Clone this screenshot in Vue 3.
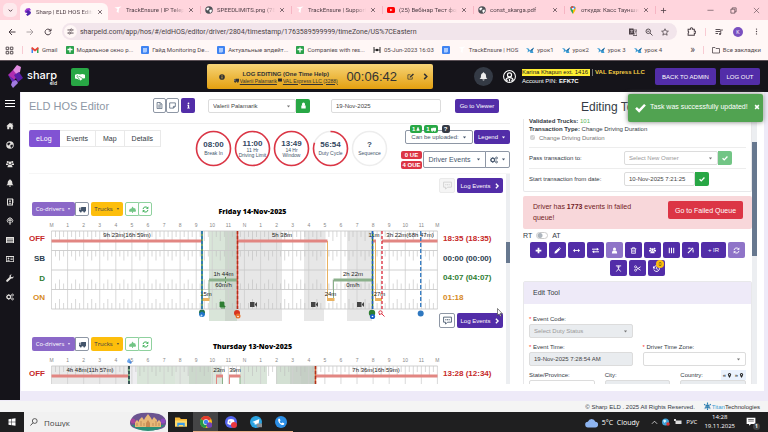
<script setup>
import { h } from 'vue'

const art = {
  chevD: '<path d="M4 6l4 4 4-4" fill="none" stroke="currentColor" stroke-width="2.2"/>',
  chevU: '<path d="M2 11l6-6 6 6" fill="none" stroke="currentColor" stroke-width="1.6"/>',
  chevR: '<path d="M5 2l6 6-6 6" fill="none" stroke="currentColor" stroke-width="3.4"/>',
  caret: '<path d="M3 5h10l-5 6z"/>',
  close: '<path d="M3 3l10 10M13 3L3 13" fill="none" stroke="currentColor" stroke-width="2"/>',
  closeThin: '<path d="M2 2l12 12M14 2L2 14" fill="none" stroke="currentColor" stroke-width="1.3"/>',
  xbold: '<path d="M3 3l10 10M13 3L3 13" fill="none" stroke="currentColor" stroke-width="4"/>',
  plusThin: '<path d="M8 2v12M2 8h12" fill="none" stroke="currentColor" stroke-width="1.8"/>',
  min: '<path d="M1 7.500h14" stroke="currentColor" stroke-width="1.4"/>',
  restore: '<path d="M2 5h9v9H2zM5 5V2h9v9h-3" fill="none" stroke="currentColor" stroke-width="1.6"/>',
  back: '<path d="M15 8H2M8 2L2 8l6 6" fill="none" stroke="currentColor" stroke-width="2"/>',
  fwd: '<path d="M1 8h13M8 2l6 6-6 6" fill="none" stroke="currentColor" stroke-width="1.8"/>',
  reload: '<path d="M13.500 9A5.700 5.700 0 1 1 12 4l2 2M14 1.500V6H9.500" fill="none" stroke="currentColor" stroke-width="2"/>',
  tune: '<path d="M1 4.500h6M13 4.500h2M1 11.500h2M9 11.500h6" stroke="currentColor" stroke-width="2"/><circle cx="10" cy="4.500" r="2.300" fill="none" stroke="currentColor" stroke-width="1.800"/><circle cx="6" cy="11.500" r="2.300" fill="none" stroke="currentColor" stroke-width="1.800"/>',
  translate: '<path d="M0 1h9l2 12H0z"/><path d="M9 4h7v11H8" fill="none" stroke="currentColor" stroke-width="1.500"/><path d="M2.500 5h5M5 3.500V5M7 5c-.5 2-2 4-4.500 5M4 6.500L7 10" stroke="#f3e5ec" fill="none"/><path d="M11 7h4M13 7c0 3-1 4-3 6" stroke="currentColor" fill="none"/>',
  zoomout: '<circle cx="6.500" cy="6.500" r="4.500" fill="none" stroke="currentColor" stroke-width="1.800"/><path d="M10 10l5 5M4.500 6.500h4" stroke="currentColor" stroke-width="1.800"/>',
  star: '<path d="M8 1.500l2 4.500 4.800.4-3.700 3.200 1.200 4.800L8 11.800l-4.300 2.600 1.200-4.800L1.200 6.400 6 6z" fill="none" stroke="currentColor" stroke-width="1.500"/>',
  ext: '<path d="M2 4h4.200a2 2 0 1 1 3.600 0H13v3.500a2 2 0 1 1 0 3.600V14.500H2V11a2 2 0 0 0 0-3.500z" fill="none" stroke="currentColor" stroke-width="1.800"/>',
  media: '<path d="M1 3h10M1 7h10M1 11h5" stroke="currentColor" stroke-width="1.800"/><circle cx="10" cy="12" r="2"/><path d="M11.500 12V4H16" fill="none" stroke="currentColor" stroke-width="1.600"/>',
  dots: '<circle cx="8" cy="2.500" r="1.500"/><circle cx="8" cy="8" r="1.500"/><circle cx="8" cy="13.500" r="1.500"/>',
  apps: '<path d="M2 2h4.500v4.500H2zM9.500 2H14v4.500H9.500zM2 9.500h4.500V14H2zM9.500 9.500H14V14H9.500z" fill="none" stroke="currentColor" stroke-width="1.700"/>',
  folder: '<path d="M1 3h5l2 2h7v9H1z" fill="none" stroke="currentColor" stroke-width="1.600"/>',
  gmail: '<path d="M1 14V4l3 2v8z" fill="#4285f4"/><path d="M15 14V4l-3 2v8z" fill="#34a853"/><path d="M1 3l1.500-1L8 6.500 13.500 2 15 3v3L8 11 1 6z" fill="#ea4335"/>',
  sheets: '<rect width="16" height="16" rx="1.500" fill="#2ba24c"/><path d="M8 3v10M3 7h10" stroke="#fff" stroke-width="2.600"/>',
  docs: '<rect width="16" height="16" rx="2" fill="#3f83f1"/><path d="M4 4h8v7l-2 2H4z" fill="#a9cbff"/>',
  bars: '<path d="M2 2v12M14 2v12M2 8h12" stroke="#333" stroke-width="2"/><circle cx="8" cy="8" r="2.500" fill="#222"/>',
  bird: '<path d="M0 4l5 1 3 4 8-6-3 6 2 5H9L7 10l-4 3 1-5z" fill="#3b9bd3"/><path d="M8 9l8-6-3 6z" fill="#1b5f93"/>',
  te: '<path d="M1 3l14-2-5 4-1 9-4-3 2-5z" fill="#fff"/>',
  globe: '<circle cx="8" cy="8" r="7.500"/><path d="M3 4l4-1 2 2-2 2-1 2-3-1zM9 8l4-1 1 3-3 4-2-2z" fill="var(--hole,#fff)"/>',
  yt: '<rect y="2" width="16" height="12" rx="3" fill="#f00"/><path d="M6.500 5.500v5L11 8z" fill="#fff"/>',
  pin: '<path d="M8 0a5.500 5.500 0 0 0-5.500 5.500C2.500 9 8 16 8 16z" fill="#34a853"/><path d="M8 0a5.500 5.500 0 0 1 5.500 5.500C13.500 9 8 16 8 16z" fill="#fbbc04"/><path d="M2.800 4A5.500 5.500 0 0 1 13.200 4L8 8z" fill="#4285f4"/><path d="M3 3.500A5.500 5.500 0 0 1 8 0v6z" fill="#ea4335"/><circle cx="8" cy="5.500" r="2" fill="#fff"/>',
  logo: '<path d="M5 1l6-1 3 4-6 3-5 3-2-4z" fill="#9b3bd2"/><path d="M3 8l5-4 6 4-1 4-6 4-3-3 3-2z" fill="#4f23ad"/>',
  home: '<path d="M8 1.500L.5 8.500h2V14.500h4v-4h3v4h4v-6h2L13 6V2.500h-2V4.200z"/>',
  users: '<circle cx="3.500" cy="4" r="2.200"/><circle cx="12.500" cy="4" r="2.200"/><circle cx="8" cy="6" r="2.900"/><path d="M0 7h4.500c0 2 .8 3 1.500 3H0zM16 7h-4.500c0 2-.8 3-1.500 3h6zM3 14.500c0-4 2-5 5-5s5 1 5 5z"/>',
  bell: '<path d="M8 .5a1.200 1.200 0 0 0-1.200 1.300C4.500 2.500 3.500 4.500 3.500 7c0 3-1 4.500-2.500 5.500h14c-1.500-1-2.500-2.500-2.500-5.500 0-2.500-1-4.500-3.300-5.200A1.200 1.200 0 0 0 8 .5zM6 13.300a2 2 0 0 0 4 0z"/>',
  book: '<path d="M2 1h12v14H2z"/><path d="M4 3h8v10H4z" fill="#15141a"/><circle cx="8" cy="6.500" r="1.800"/><path d="M5 11.500c0-3 6-3 6 0z"/><path d="M14 3h1.500v2H14zM14 7h1.500v2H14z"/>',
  podcast: '<path d="M4.500 11.500a5.500 5.500 0 1 1 7 0M5.800 8.800a3 3 0 1 1 4.400 0" fill="none" stroke="currentColor" stroke-width="1.700"/><circle cx="8" cy="6.800" r="1.800"/><path d="M6.300 9.500h3.400L9 15.500H7z"/>',
  list: '<path d="M0 2h16v12H0z"/><path d="M2 6h12M2 9h12M2 12h12" stroke="#15141a" stroke-width="1.100"/>',
  idcard: '<path d="M0 2h16v12H0z"/><path d="M1.500 4h13v8.500h-13z" fill="#15141a"/><circle cx="5" cy="6.800" r="1.700"/><path d="M2.500 11.500c0-3 5-3 5 0zM9 5.500h4.500V7H9zM9 8.500h4.500V10H9z"/>',
  wrench: '<path d="M15 4.500l-2.500 2-2.500-.5L9.500 3.500 11.500 1C8.500.3 6.300 3 7.200 5.800L1 12a2 2 0 0 0 3 3l6.200-6.200C13 9.700 15.700 7.500 15 4.500z"/>',
  cogs: '<circle cx="5.500" cy="8" r="3.600" fill="none" stroke="currentColor" stroke-width="2.400"/><path d="M5.500 2.500v2M5.500 11.500v2M0 8h2M9 8h2M1.600 4l1.400 1.400M8 10.600L9.400 12M9.400 4L8 5.400M1.600 12L3 10.600" stroke="currentColor" stroke-width="1.800"/><circle cx="13" cy="4" r="1.900" fill="none" stroke="currentColor" stroke-width="1.700"/><circle cx="13" cy="12" r="1.900" fill="none" stroke="currentColor" stroke-width="1.700"/>',
  shake: '<path d="M0 4.500L4 3l4 1 4-1 4 1.500v5.500l-3 .5-4 3-5-2.500-4-.5z"/><path d="M4 5L3 8c1 1 3 .5 4-1l6 4M5 10l3 2" stroke="#28a745" fill="none" stroke-width="1.100"/>',
  info: '<circle cx="8" cy="8" r="7.500"/><path d="M8 6.500V12M8 3.500v2" stroke="#e9b840" stroke-width="2.400"/>',
  i: '<path d="M5.500 6.500h4V13H11v2H5v-2h1.500V8.500h-1z"/><circle cx="8" cy="3" r="2"/>',
  edit: '<path d="M12 9v5H2V4h6" fill="none" stroke="currentColor" stroke-width="1.600"/><path d="M6 10.500L6.500 8l7-7L16 3.500 8.500 10z"/>',
  headset: '<circle cx="8" cy="8" r="7.300" fill="none" stroke="currentColor" stroke-width="1.300"/><circle cx="8" cy="6" r="2.500" fill="none" stroke="currentColor" stroke-width="1.500"/><path d="M3.500 13c0-5 9-5 9 0M5 12v2M8 11v3M11 12v2" fill="none" stroke="currentColor" stroke-width="1.500"/>',
  doc: '<path d="M2.500 1h7l4 4v10h-11z" fill="none" stroke="currentColor" stroke-width="1.600"/><path d="M5 7h6M5 9.500h6M5 12h6M9 1v4h4" fill="none" stroke="currentColor" stroke-width="1.300"/>',
  note: '<path d="M1.500 2h13v8l-4 4h-9zM14 10h-4v4" fill="none" stroke="currentColor" stroke-width="1.600"/>',
  lock: '<path d="M8 1a4 4 0 0 0-3.500 4c0 1.500.5 2.500 1 3H3v7h10V8h-2.500c.5-.5 1-1.500 1-3A4 4 0 0 0 8 1z"/>',
  person: '<circle cx="8" cy="4.500" r="3.500"/><path d="M2 15c0-6 2-7 6-7s6 1 6 7z"/>',
  truck: '<path d="M0 4h5V2.500h11V12H0z"/><circle cx="4" cy="12.500" r="2.300"/><circle cx="12" cy="12.500" r="2.300"/><path d="M1.500 5.500h2.800V8H1z" fill="#fff"/>',
  tree: '<path d="M8 1l3 4h3l2 6-1 2H1l-1-2 2-5h3zM7 13h2v3H7z"/>',
  sync: '<path d="M2.500 7A5.500 5.500 0 0 1 12.500 4.500M13.500 9A5.500 5.500 0 0 1 3.500 11.500" fill="none" stroke="currentColor" stroke-width="2.100"/><path d="M14.500 1v5.500H9zM1.500 15V9.500H7z"/>',
  chat: '<path d="M1 2h14v9H8l-3.500 3.500V11H1z" fill="none" stroke="currentColor" stroke-width="1.500"/><path d="M4 6.500h2M7 6.500h2M10 6.500h2" stroke="currentColor" stroke-width="1.800"/>',
  check: '<path d="M1.500 8.500l4.500 4.500L14.500 4" fill="none" stroke="currentColor" stroke-width="3.600"/>',
  plus: '<path d="M8 1.500v13M1.500 8h13" stroke="currentColor" stroke-width="4"/>',
  pencil: '<path d="M1 15l1-4.500L10.500 2 14 5.500 5.500 14zM11.500 1l1-.8L15.800 3.500l-1 1z"/>',
  arrows: '<path d="M3 8h10" stroke="currentColor" stroke-width="2"/><path d="M0 8l4.500-4v8zM16 8l-4.500-4v8z"/>',
  swap: '<path d="M0 5h12M4 11h12" stroke="currentColor" stroke-width="2.200"/><path d="M11 1.500L16 5l-5 3.500zM5 7.500L0 11l5 3.500z"/>',
  trash: '<path d="M1.500 4h13M5.500 4V1.500h5V4M3.500 4v10.500h9V4M6.500 6.500v6M9.500 6.500v6" fill="none" stroke="currentColor" stroke-width="1.700"/>',
  cols: '<path d="M3 1.500v13M8 1.500v13M13 1.500v13" stroke="currentColor" stroke-width="2.400"/>',
  wand: '<path d="M2 14L14 2" stroke="currentColor" stroke-width="2.400"/><path d="M2 3h9M14 5v8M5 1v4M12 9h4" stroke="currentColor" stroke-width="1.500"/>',
  merge: '<path d="M2 2h12M8 4v5L3 15M8 9l5 6M5 5l3-2 3 2" fill="none" stroke="currentColor" stroke-width="2"/>',
  cut: '<circle cx="3.500" cy="4" r="2.300" fill="none" stroke="currentColor" stroke-width="1.700"/><circle cx="3.500" cy="12" r="2.300" fill="none" stroke="currentColor" stroke-width="1.700"/><path d="M5.500 5.500L15 12M5.500 10.500L15 4" stroke="currentColor" stroke-width="2"/>',
  history: '<path d="M2 6a6.500 6.500 0 1 1 0 4.500" fill="none" stroke="currentColor" stroke-width="2.200"/><path d="M0 2v6h6zM7.500 4.500h1.800V8l2.500 1.500-1 1.300L7.500 9z"/>',
  marker: '<path d="M8 0a5 5 0 0 0-5 5c0 4 5 11 5 11s5-7 5-11a5 5 0 0 0-5-5z"/><circle cx="8" cy="5.500" r="2" fill="#eaf2fd"/>',
  win: '<path d="M1 2.500l6-.8v5.800H1zM8 1.600L15 .5v7H8zM1 8.500h6v5.800l-6-.8zM8 8.500h7v7l-7-1z"/>',
  search: '<circle cx="9.500" cy="6" r="4.800" fill="none" stroke="currentColor" stroke-width="1.500"/><path d="M6 9.500L1 15" stroke="currentColor" stroke-width="1.700"/>',
  files: '<path d="M0 2h6l2 2h8v10H0z" fill="#f5b93a"/><path d="M0 6h16v8H0z" fill="#ffd968"/><path d="M3 9h10v5H11v-2H5v2H3z" fill="#3a9be8"/>',
  chrome: '<circle cx="8" cy="8" r="8" fill="#fbc116"/><path d="M8 8L1 4a8 8 0 0 1 14 0z" fill="#e33b2e"/><path d="M8 8L1 4a8 8 0 0 0 6 12l4-6z" fill="#279847"/><circle cx="8" cy="8" r="3.800" fill="#fff"/><circle cx="8" cy="8" r="3" fill="#3f83f1"/><circle cx="12.500" cy="12" r="3.800" fill="#7443b8"/>',
  discord: '<circle cx="8" cy="8" r="8" fill="#5566ee"/><path d="M4 5c2-1.500 6-1.500 8 0l1 5-2.500 1.500H5.500L3 10z" fill="#fff"/><circle cx="6.300" cy="8" r="1" fill="#5566ee"/><circle cx="12" cy="12" r="4" fill="#e9373f"/>',
  telegram: '<circle cx="8" cy="8" r="8" fill="#2ba3e0"/><path d="M3 8l9.500-4-1.500 8.500-3-2-1.500 1.500-.5-3z" fill="#fff"/><path d="M9 10h7v5H9z" fill="#8b8f94"/>',
  phone: '<circle cx="8" cy="8" r="8" fill="#2c8fe6"/><path d="M4.500 3.500l2 .2.800 2.500-1 1c.5 1.300 1.300 2 2.500 2.500l1-1 2.500 1-.2 2C8 13 3 8 4.500 3.500z" fill="#fff"/>',
  cloud: '<path d="M4 14a3.500 3.500 0 0 1-.5-7A5 5 0 0 1 12.800 7 3.500 3.500 0 0 1 12.500 14z" fill="#8db4f0"/>',
  world: '<circle cx="7" cy="8" r="7" fill="#3fa3d8"/><path d="M2 5l4-2 3 3-4 4z" fill="#d7f0ff"/><circle cx="12" cy="12" r="3.500" fill="#d33"/>',
  notif: '<path d="M1 1h14v10H8l-3 3v-3H1z" fill="#fff"/><path d="M3.500 4h9M3.500 6.500h9" stroke="#222"/>',
  batt: '<path d="M3 5h12v7H3zM0 2h4v4H0z" fill="#ddd"/>',
  titan: '<path d="M8 1v14M2 4l12 8M14 4L2 12" stroke="#2a82b8" stroke-width="2" stroke-dasharray="2.500 1"/><circle cx="8" cy="8" r="3" fill="none" stroke="#2a6f9c" stroke-width="1.500"/>',
}
const Icon = (p) => h('svg', {
  viewBox: '0 0 16 16', width: p.s || 8, height: p.s || 8, fill: 'currentColor', 'aria-hidden': 'true', innerHTML: art[p.n],
})
Icon.props = ['n', 's']

const tabs = [
  { t: 'TrackEnsure | IP Telephony', i: 'te' },
  { t: 'SPEEDLIMITS.png (780×', i: 'globe' },
  { t: 'TrackEnsure | Support', i: 'te' },
  { t: '(25) Вебінар Тест форм', i: 'yt' },
  { t: 'const_skarga.pdf', i: 'globe' },
  { t: 'откуда: Касс Тауншип', i: 'pin' },
]
const marks = [
  { t: 'Gmail', i: 'gmail' },
  { t: 'Модальное окно р...', i: 'sheets' },
  { t: 'Гайд Monitoring De...', i: 'docs' },
  { t: 'Актуальные апдейт...', i: 'docs' },
  { t: 'Companies with res...', i: 'sheets' },
  { t: '05-Jun-2023 16:03', i: 'bars' },
  { t: '', i: 'docs' },
  { t: 'TrackEnsure | HOS', i: 'te' },
  { t: 'урок1', i: 'bird' },
  { t: 'урок2', i: 'bird' },
  { t: 'урок 3', i: 'bird' },
  { t: 'урок 4', i: 'bird' },
]
const side = ['home', 'globe', 'users', 'bell', 'book', 'podcast', 'list', 'idcard', 'wrench', 'cogs']

const ringLen = 2 * Math.PI * 17
const rings = [
  { v: '08:00', a: 'Break In', part: 1 },
  { v: '11:00', a: '11 Hr', b: 'Driving Limit', part: 1 },
  { v: '13:49', a: '14 Hr', b: 'Window', part: 1 },
  { v: '56:54', a: 'Duty Cycle', part: 0.8 },
  { v: '?', a: 'Sequence', part: 0 },
]

const X0 = 51.5
const HW = 16.08
const hours = ['M', 1, 2, 3, 4, 5, 6, 7, 8, 9, 10, 11, 'N', 1, 2, 3, 4, 5, 6, 7, 8, 9, 10, 11, 'M']
const hx = (i) => X0 + HW * i
const rowTop = (r) => 231 + 19.5 * r
const ticks = (() => {
  let d = ''
  for (let r = 0; r < 4; r++) {
    for (let q = 0; q < 96; q++) {
      if (q % 4 === 0) continue
      const len = q % 4 === 2 ? 10 : 6
      const x = (X0 + (HW * q) / 4).toFixed(1)
      d += r < 2 ? `M${x} ${rowTop(r)}v${len}` : `M${x} ${rowTop(r + 1)}v${-len}`
    }
  }
  return d
})()
const red = '#e28682', grn = '#8bb08b', org = '#e9b261'
const days = [
  {
    title: 'Friday 14-Nov-2025', chatOff: true,
    shades: [[209, 16, '#d9e5d9'], [225, 12, '#ccd6cc'], [237, 45, '#e7e7e7'], [304, 20, '#e7e7e7'], [347, 25, '#e7e7e7']],
    bars: [[51.5, 202, 241, red], [202.5, 209.5, 299.5, org], [209, 237, 280, grn], [238, 327.5, 241, red], [327, 334.5, 299.5, org], [333.5, 373, 280, grn], [373, 376, 241, red], [375, 382, 299.5, org], [382, 437.5, 241, red]],
    links: [[209, 280, 299, grn], [327.5, 241, 299, org], [333.5, 280, 299, grn], [375.5, 241, 299, org], [225.5, 277, 283, '#3f7d3f']],
    lines: [[202, '#2e7d32', ''], [202, '#1e73c8', '3 2'], [237.5, '#e23b2e', ''], [237.5, '#b0301a', '3 2'], [372.5, '#2e7d32', ''], [372.5, '#1e5fc8', '3 2'], [382, '#dc3545', '3 2'], [420.7, '#3a7fc4', '4 2']],
    notes: [[127, 236.5, '9h 23m(16h 59m)'], [223.5, 276, '1h 44m'], [223.5, 286.5, '60m/h'], [206, 295.5, '15m'], [282, 236.5, '5h 38m'], [330.5, 295.5, '24m'], [353, 276, '2h 22m'], [353, 286.5, '0m/h'], [374, 236.5, '11m'], [379.5, 295.5, '27m'], [410, 236.5, '3h 22m(68h 47m)']],
    cams: [253, 314, 360], full: true,
    total: '18:35 (18:35)',
  },
  {
    title: 'Thursday 13-Nov-2025', chatOff: false,
    shades: [[51.5, 77, '#e9e9e9'], [130, 7, '#eeeef1'], [137, 38, '#d9e5d9'], [175, 14, '#dfe6df'], [189, 22, '#ccd9cc'], [211, 11, '#dce6dc'], [240, 27, '#d9e5d9'], [276, 14, '#d3e0d3'], [290, 11, '#c9d2c9'], [301, 14, '#c5cfc5']],
    bars: [[51.5, 128.5, 241, red], [216, 223, 241, red], [229, 240.5, 241, red], [315.5, 437.5, 241, red]],
    links: [[216.5, 241, 300, red], [222.5, 241, 300, grn], [229.5, 241, 300, red], [240, 241, 300, grn]],
    lines: [[129, '#3f8f4f', ''], [129, '#234', '3 2'], [315.5, '#e2602e', ''], [315.5, '#b0301a', '3 2']],
    notes: [[90, 236.5, '4h 48m(11h 57m)'], [219, 236.5, '23m'], [235, 236.5, '39m'], [376, 236.5, '7h 36m(16h 59m)']],
    cams: [], full: false,
    total: '13:28 (12:34)',
  },
]
const tools = ['plus', 'pencil', 'arrows', 'swap', 'person', 'trash', 'users', 'cols', 'wand', 'ir', 'sync', 'merge', 'cut', 'history']
</script>

<template>
  <div class="screen">
    <nav class="tabstrip">
      <button class="tabmenu" aria-label="Search tabs"><Icon n="chevD" s="7" /></button>
      <div class="tab active">
        <Icon n="logo" /><span class="tabtext">Sharp | ELD HOS Editor</span><Icon n="close" s="6" />
      </div>
      <div v-for="t in tabs" :key="t.t" class="tab">
        <Icon :n="t.i" class="grey" /><span class="tabtext">{{ t.t }}</span><Icon n="close" s="6" />
      </div>
      <Icon n="plusThin" s="7" class="newtab" />
      <div class="winbtns"><Icon n="min" s="7" /><Icon n="restore" s="7" /><Icon n="closeThin" s="7" /></div>
    </nav>
    <div class="toolbar">
      <Icon n="back" /><Icon n="fwd" class="dim" /><Icon n="reload" />
      <div class="omni">
        <span class="tune"><Icon n="tune" s="7" /></span>
        <span class="url">sharpeld.com/app/hos/#/eldHOS/editor/driver/2804/timestamp/1763589599999/timeZone/US%7CEastern</span>
        <Icon n="translate" /><Icon n="zoomout" /><Icon n="star" />
      </div>
      <Icon n="ext" s="9" /><i class="vsep"></i><Icon n="media" /><span class="avatar">K</span><Icon n="dots" s="7" />
    </div>
    <div class="marks">
      <Icon n="apps" s="9" /><i class="vsep"></i>
      <a v-for="m in marks" :key="m.t + m.i" href="#" class="mark"><Icon :n="m.i" /><span v-if="m.t">{{ m.t }}</span></a>
      <span class="more">»</span><i class="vsep"></i>
      <a href="#" class="mark"><Icon n="folder" /><span>Все закладки</span></a>
    </div>

    <header class="apphead">
      <a href="#" class="brand">
        <svg viewBox="0 0 15 23" width="15" height="23" aria-hidden="true">
          <path d="M5 5L9 0l4 2-1 5-6 4z" fill="#e08be0" /><path d="M0 10l5-5 5 6-4 4z" fill="#b02db0" />
          <path d="M6 10l5-3 4 6-5 4z" fill="#5a1fa8" /><path d="M0 10l4 3 6 4-4 3z" fill="#6a2bbb" /><path d="M4 17l4-2 2 3-5 5-2-3z" fill="#a27be0" />
        </svg>
        <span class="bname">sharp<small>eld</small></span>
      </a>
      <button class="shake" aria-label="Partners"><Icon n="shake" s="10" /></button>
      <div class="editbar">
        <Icon n="info" s="6" />
        <div class="edittext"><b>LOG EDITING (One Time Help)</b><a href="#"><Icon n="truck" s="5" /> Valerii Palamarik <Icon n="list" s="4" /> VAL Express LLC (3288)</a></div>
        <span class="timer">00:06:42</span>
        <Icon n="edit" s="7" /><Icon n="chevR" s="7" />
      </div>
      <span class="bellbox"><Icon n="bell" s="9" /></span>
      <Icon n="headset" s="13" class="headset" />
      <div class="who"><div><mark>Karina Khapun ext. 1416</mark><i></i><b class="comp">VAL Express LLC</b></div><div>Account PIN: <b>EFK7C</b></div></div>
      <button class="btn big admin">BACK TO ADMIN</button>
      <button class="btn big">LOG OUT</button>
      <div class="toast" role="status"><Icon n="check" s="11" /><span>Task was successfully updated!</span><Icon n="xbold" s="6" /></div>
    </header>

    <div class="body">
      <aside class="side">
        <button class="burger" aria-label="Menu"><i></i><i></i><i></i></button>
        <a v-for="s in side" :key="s" href="#" :aria-label="s"><Icon :n="s" /></a>
      </aside>
      <main class="main">
        <section class="left">
          <div class="filters">
            <h1>ELD HOS Editor</h1>
            <div class="group">
              <button class="ob" aria-label="Document"><Icon n="doc" s="7" /></button><button class="ob" aria-label="Note"><Icon n="note" s="7" /></button><button class="btn sq" aria-label="Info"><Icon n="i" s="7" /></button>
            </div>
            <div class="group driver">
              <div class="selwrap"><select class="sel" aria-label="Driver"><option>Valerii Palamarik</option></select><Icon n="caret" s="5" /></div>
              <button class="green" aria-label="Lock"><Icon n="lock" s="7" /></button>
            </div>
            <input class="inp" aria-label="Date" value="19-Nov-2025">
            <button class="btn viewer">Go to Viewer</button>
          </div>
          <div class="summary">
            <div class="pills"><button class="on">eLog</button><button>Events</button><button>Map</button><button>Details</button></div>
            <div class="rings">
              <svg v-for="r in rings" :key="r.v" viewBox="0 0 37 37" width="37" height="37" role="img">
                <circle cx="18.500" cy="18.500" r="17" fill="none" stroke="#ededed" stroke-width="1.500" />
                <circle v-if="r.part" cx="18.500" cy="18.500" r="17" fill="none" stroke="#dc3545" stroke-width="1.600" :stroke-dasharray="`${ringLen * r.part} ${ringLen}`" transform="rotate(-90 18.500 18.500)" />
                <text x="18.500" :y="r.b ? 15.5 : 16.5" class="rv">{{ r.v }}</text>
                <text x="18.500" :y="r.b ? 21.5 : 24.5" class="rt">{{ r.a }}</text>
                <text v-if="r.b" x="18.500" y="26.500" class="rt">{{ r.b }}</text>
              </svg>
            </div>
            <div class="ctl">
              <div class="ctlrow">
                <button class="ob upload">Can be uploaded: <Icon n="caret" s="5" /><span class="badges"><b>1<Icon n="person" s="4" /></b><b>1<Icon n="truck" s="5" /></b><b class="q">?</b></span></button>
                <button class="btn legend">Legend <Icon n="caret" s="5" /></button>
              </div>
              <div class="ctlrow second">
                <div class="ue"><b>0 UE</b><b>4 OUE</b></div>
                <button class="ob devents">Driver Events <Icon n="caret" s="5" /></button>
                <button class="ob gear" aria-label="Settings"><Icon n="cogs" /><Icon n="caret" s="5" /></button>
              </div>
            </div>
          </div>
          <div class="scroll">
            <div class="days">
              <article v-for="d in days" :key="d.title" class="day">
                <div class="dayacts">
                  <button class="ob chat" :class="{ off: d.chatOff }" aria-label="Comment"><Icon n="chat" s="9" /></button>
                  <button class="btn">Log Events <Icon n="chevR" s="6" /></button>
                  <svg v-if="!d.full" class="cursor" viewBox="0 0 6 9" width="6" height="9" aria-hidden="true"><path d="M.5.5v7l1.600-1.500 1.200 2.500 1-.5-1.100-2.400H5.300z" fill="#fff" stroke="#333" stroke-width=".6" /></svg>
                </div>
                <div class="dayhead">
                  <div class="group">
                    <button class="codr">Co-drivers <Icon n="caret" s="4" /></button><button class="ob trk" aria-label="Truck"><Icon n="truck" s="7" /></button>
                    <button class="trucks">Trucks <Icon n="caret" s="4" /></button>
                    <button class="go a" aria-label="Tree"><Icon n="tree" s="7" /></button><button class="go b" aria-label="Refresh"><Icon n="sync" s="7" /></button>
                  </div>
                  <h2>{{ d.title }}</h2>
                </div>
                <svg class="chart" viewBox="29 220 477 93">
                  <rect v-for="(s, i) in d.shades" :key="i" :x="s[0]" y="231" :width="s[1]" height="90" :fill="s[2]" />
                  <text v-for="(t, i) in hours" :key="'h' + i" :x="hx(i)" y="227" class="hr">{{ t }}</text>
                  <path :d="ticks" stroke="#bdbdbd" stroke-width=".6" />
                  <path v-for="(t, i) in hours" :key="'v' + i" :d="`M${hx(i)} 231v78`" stroke="#cfcfcf" stroke-width=".8" />
                  <path v-for="r in 5" :key="'r' + r" :d="`M51.500 ${rowTop(r - 1)}h386`" stroke="#c9c9c9" stroke-width=".9" />
                  <path v-for="(l, i) in d.links" :key="'k' + i" :d="`M${l[0]} ${l[1]}V${l[2]}`" :stroke="l[3]" stroke-width="1" />
                  <path v-for="(b, i) in d.bars" :key="'b' + i" :d="`M${b[0]} ${b[2]}H${b[1]}`" :stroke="b[3]" stroke-width="3" />
                  <text v-for="(n, i) in d.notes" :key="'n' + i" :x="n[0]" :y="n[1]" class="dur">{{ n[2] }}</text>
                  <path v-for="(l, i) in d.lines" :key="'l' + i" :d="`M${l[0]} 231v78`" :stroke="l[1]" stroke-width="1.400" :stroke-dasharray="l[2]" />
                  <path v-for="c in d.cams" :key="'c' + c" :d="`M${c - 3} 302h4.500v5h-4.500zM${c + 2} 304l2-2v5l-2-2z`" fill="#444" />
                  <g v-if="d.full">
                    <path d="M220 302h4v4h1v1h-5zM221 308h4" fill="#2e7d32" stroke="#2e7d32" stroke-width=".8" />
                    <circle cx="202" cy="312.500" r="3" fill="#27754f" /><path d="M199 313.500a3 3.500 0 1 0 6 0l-3-2z" fill="#1e73c8" />
                    <circle cx="201.500" cy="315.500" r="1" fill="#bfe0ff" />
                    <circle cx="237" cy="313" r="3" fill="#d8341f" /><circle cx="238" cy="316" r="2.500" fill="#e8702a" /><circle cx="238" cy="316.500" r=".8" fill="#fff" />
                    <circle cx="372" cy="313" r="3.200" fill="#2e7d32" /><circle cx="372.500" cy="316.500" r="2.600" fill="#1e62c8" /><circle cx="372.500" cy="316.500" r=".8" fill="#fff" />
                    <circle cx="380.500" cy="312.500" r="1.700" fill="none" stroke="#dc3545" /><path d="M381.500 313.500l3 3M380 315l-1-1" stroke="#dc3545" />
                    <circle cx="420.700" cy="313.500" r="3" fill="#2f78c0" />
                    <text x="45" y="241" class="st end" fill="#c62828">OFF</text><text x="45" y="261" class="st end" fill="#2c3e50">SB</text>
                    <text x="45" y="280.500" class="st end" fill="#2e7d32">D</text><text x="45" y="300" class="st end" fill="#d68a1c">ON</text>
                    <text x="443" y="241" class="st" fill="#c62828">{{ d.total }}</text><text x="443" y="260.500" class="st" fill="#2c3e50">00:00 (00:00)</text>
                    <text x="443" y="280" class="st" fill="#2e7d32">04:07 (04:07)</text><text x="443" y="299.500" class="st" fill="#d68a1c">01:18</text>
                  </g>
                  <g v-else>
                    <text x="45" y="241" class="st end" fill="#c62828">OFF</text><text x="443" y="241" class="st" fill="#c62828">{{ d.total }}</text>
                    <path d="M129 223l2 3a2 2 0 1 1-4 0z" fill="#6aa5ee" /><circle cx="130.500" cy="227.500" r="1.200" fill="#4a86d8" />
                  </g>
                </svg>
              </article>
            </div>
            <div class="track"><i class="thumb lthumb"></i></div>
          </div>
        </section>

        <section class="right">
          <h2 class="rtitle">Editing Tools</h2>
          <div class="scroll">
            <div class="panel">
              <div class="card trans">
                <p class="cut"><b>Validated Trucks:</b> <span class="gtext">101</span></p>
                <p><b>Transaction Type:</b> Change Driving Duration</p>
                <label class="chk"><input type="checkbox" checked disabled> Change Driving Duration</label>
                <div class="trow">
                  <label for="owner">Pass transaction to:</label>
                  <div class="group"><div class="selwrap own"><select id="owner" class="sel ph"><option>Select New Owner</option></select><Icon n="caret" s="5" /></div><button class="green fade" aria-label="Apply owner"><Icon n="check" s="6" /></button></div>
                </div>
                <div class="trow">
                  <label for="start">Start transaction from date:</label>
                  <div class="group"><input id="start" class="inp date" value="10-Nov-2025 7:21:25"><button class="green" aria-label="Apply date"><Icon n="check" s="6" /></button></div>
                </div>
              </div>
              <div class="alert"><p>Driver has <b>1773</b> events in failed queue!</p><button>Go to Failed Queue</button></div>
              <label class="rt-at">RT <input type="checkbox" class="sw"> AT</label>
              <div class="tools">
                <button v-for="t in tools" :key="t" class="btn tool" :class="{ soft: t === 'person' || t === 'sync', wide: t === 'ir' }" :aria-label="t">
                  <span v-if="t === 'ir'">+ IR</span><Icon v-else :n="t" s="7" /><span v-if="t === 'history'" class="cnt">0</span>
                </button>
              </div>
              <div class="card tool-card">
                <h3>Edit Tool</h3>
                <div class="form">
                  <div class="fld half"><label for="code"><em>*</em> Event Code:</label><div class="selwrap"><select id="code" class="sel ph dis" disabled><option>Select Duty Status</option></select><Icon n="caret" s="5" /></div></div>
                  <div class="two">
                    <div class="fld"><label for="time"><em>*</em> Event Time:</label><input id="time" class="inp dis" value="19-Nov-2025 7:28:54 AM"></div>
                    <div class="fld"><label for="tz"><em>*</em> Driver Time Zone:</label><div class="selwrap"><select id="tz" class="sel"><option></option></select><Icon n="caret" s="5" /></div></div>
                  </div>
                  <div class="three">
                    <div class="fld"><label for="st">State/Province:</label><input id="st" class="inp"></div>
                    <div class="fld"><label for="city">City:</label><input id="city" class="inp dis"></div>
                    <div class="fld"><div class="crow"><label for="ctry">Country:</label><span class="pins">«<Icon n="marker" s="5" /> »<Icon n="marker" s="5" /></span></div><input id="ctry" class="inp dis"></div>
                  </div>
                </div>
              </div>
            </div>
            <div class="track"><i class="thumb rthumb"></i></div>
          </div>
        </section>
      </main>
    </div>
    <footer class="foot"><span>© Sharp ELD . 2025 All Rights Reserved.</span><span class="titan"><Icon n="titan" s="9" /><i>Titan</i>Technologies</span></footer>

    <div class="taskbar">
      <button class="start" aria-label="Start"><Icon n="win" /></button>
      <label class="tsearch"><Icon n="search" /><input type="text" placeholder="Пошук" aria-label="Пошук"></label>
      <svg class="castle" viewBox="0 0 38 20" width="38" height="20" aria-hidden="true">
        <path d="M1 10Q3 2 12 1T30 2Q38 5 37 12T19 18Q0 18 1 10z" fill="#6b5490" /><path d="M2 13h34l-6 4q-11 4-22 0z" fill="#2b8f76" />
        <path d="M6 15V10l2-2 2 2V8l3-3 2 3 1-2 3-4 3 4 1 2 2-3 3 3v2l2-2 2 2v5z" fill="#e8b878" /><path d="M17 15v-4l2-3 2 3v4z" fill="#c98a52" />
        <path d="M8 11v3M12 9v5M15 11v3M24 11v3M27 9v5M30 11v3" stroke="#b07a4a" stroke-width=".7" /><circle cx="4" cy="9" r="2.500" fill="#a8479a" /><circle cx="34" cy="9" r="2.500" fill="#8f4ac0" />
      </svg>
      <div class="apps">
        <button aria-label="Files"><Icon n="files" s="12" /></button><button class="run cur" aria-label="Chrome"><Icon n="chrome" s="12" /></button>
        <button class="run" aria-label="Discord"><Icon n="discord" s="12" /></button><button class="run" aria-label="Telegram"><Icon n="telegram" s="12" /></button><button class="run" aria-label="Phone"><Icon n="phone" s="12" /></button>
      </div>
      <div class="tray">
        <Icon n="cloud" s="13" /><span class="wx">5°C&nbsp; Cloudy</span><Icon n="chevU" s="7" /><Icon n="world" /><Icon n="batt" /><span class="lang">РУС</span>
        <span class="clock">14:28<br>19.11.2025</span><span class="nt"><Icon n="notif" s="10" /><b>1</b></span>
      </div>
    </div>
  </div>
</template>

<style>
body { background: #fff; }
</style>
<style scoped>
* { box-sizing: border-box; margin: 0; }
.screen { height: 100vh; display: flex; flex-direction: column; overflow: hidden; font: 6px/8px "Liberation Sans", sans-serif; color: #333a44; }
svg { flex: none; display: block; }
button, input, select { font: inherit; color: inherit; border: 0; padding: 0; background: none; }
button { display: flex; align-items: center; justify-content: center; white-space: nowrap; gap: 3px; }
a { color: inherit; text-decoration: none; }
.tabstrip { flex: none; height: 20px; background: #ffd5dd; display: flex; align-items: center; font: 6px/8px "Roboto", sans-serif; color: #514048; }
.tabmenu { width: 14px; height: 14px; border-radius: 5px; background: #fdeaed; margin: 0 3px; }
.tab { width: 91px; height: 8px; padding: 0 6px 0 4px; display: flex; align-items: center; gap: 4px; border-right: 1px solid #f6b5c3; }
.tab.active { width: 88px; height: 17px; align-self: end; background: #fff7f6; border: 0; border-radius: 6px 6px 0 0; padding: 0 5px 0 4px; margin-right: 2px; }
.tabtext { flex: 1; overflow: hidden; white-space: nowrap; mask-image: linear-gradient(90deg, #000 80%, transparent); }
.grey { color: #4d5156; }
.newtab { margin-left: 4px; }
.winbtns { margin-left: auto; display: flex; gap: 16px; padding-right: 8px; }
.toolbar { flex: none; height: 23px; background: #fff7f6; display: flex; align-items: center; padding: 0 8px; gap: 10px; color: #4a3f45; }
.dim { opacity: .5; }
.omni { flex: 1; height: 17px; border-radius: 9px; background: #f2e5eb; display: flex; align-items: center; gap: 8px; padding: 0 8px 0 1px; font: 7px/10px "Roboto", sans-serif; }
.tune { width: 13px; height: 13px; margin-left: 1px; border-radius: 50%; background: #fff7f6; display: grid; place-items: center; }
.url { flex: 1; white-space: nowrap; overflow: hidden; margin-left: -5px; }
.vsep { width: 1px; height: 8px; background: #f8cbd3; }
.toolbar > .vsep { margin: 0 -1px; }
.avatar { width: 10px; height: 10px; border-radius: 50%; background: #7a50c0; color: #fff; font-size: 5px; line-height: 10px; text-align: center; }
.marks { flex: none; height: 17px; background: #fff7f6; display: flex; align-items: center; padding: 0 7px 3px 5px; gap: 8px; font: 6px/8px "Roboto", sans-serif; color: #52484d; }
.mark { display: flex; align-items: center; gap: 3px; white-space: nowrap; }
.more { margin-left: auto; font-size: 10px; }

.apphead { flex: none; position: relative; height: 32px; border-top: 1px solid #5b5056; background: #15141a; display: flex; align-items: center; padding: 0 8px; color: #fff; }
.brand { display: flex; align-items: center; gap: 4px; width: 63px; }
.bname { font: 500 11px/11px "Inter", sans-serif; padding-top: 3px; }
.bname small { display: block; font-size: 5px; line-height: 5px; text-align: right; }
.shake { width: 18px; height: 18px; border-radius: 2px; background: #28a745; margin-right: 118px; }
.editbar { width: 226px; height: 25px; border-radius: 2px; background: linear-gradient(#f7d477, #e3a010); color: #333; display: flex; align-items: center; padding: 0 4px 0 12px; gap: 8px; }
.edittext { flex: 1; text-align: center; white-space: nowrap; }
.edittext b { display: block; }
.edittext a { display: flex; justify-content: center; gap: 1px; font-size: 5px; line-height: 6px; text-decoration: underline; }
.timer { font-size: 13px; line-height: 14px; margin-right: 2px; }
.bellbox { width: 19px; height: 19px; border-radius: 50%; background: #343a45; display: grid; place-items: center; margin: 0 10px 0 41px; color: #eee; }
.headset { margin-right: 6px; }
.who { flex: 1; line-height: 9px; white-space: nowrap; }
.who div { display: flex; align-items: center; gap: 2px; }
.who i { width: 1px; height: 7px; background: #777; }
mark { background: #ffee32; color: #222; line-height: 7px; padding-right: 2px; }
.comp { color: #f5cf45; }
.btn { background: #522da8; color: #fff; border-radius: 2px; height: 15px; padding: 0 4px; }
.big { height: 17px; width: 40px; padding: 0; }
.admin { width: 61px; margin-right: 4px; }
.toast { position: absolute; right: 5px; top: 33px; width: 135px; height: 28px; border-radius: 2px; background: #51a351; box-shadow: 0 0 5px #777; display: flex; align-items: center; gap: 4px; padding: 0 3px 2px 7px; z-index: 3; font-size: 7px; white-space: nowrap; }
.toast span { flex: 1; }

.body { flex: 1; min-height: 0; display: flex; background: #eeeaf8; }
.side { flex: none; width: 20px; background: #15141a; display: flex; flex-direction: column; align-items: center; color: #e4e2df; --hole: #15141a; padding-top: 7px; margin-bottom: 1px; }
.side a { height: 19px; display: grid; place-items: center; }
.burger { flex-direction: column; width: 10px; height: 9px; gap: 2px; margin-bottom: 8px; }
.burger i { width: 10px; height: 1px; background: #fff; }
.main { flex: 1; min-width: 0; background: #fff; margin: 0 4px 10px 1px; padding-bottom: 7px; display: grid; grid-template-columns: minmax(0, 1fr) 252px; grid-template-rows: minmax(0, 1fr); }
.left { display: flex; flex-direction: column; min-height: 0; padding: 6px 2px 0 8px; }
.filters { display: grid; grid-template-columns: 124px 55px 123px 110px auto; align-items: center; justify-content: start; padding-bottom: 10px; border-bottom: 1px solid #efefef; }
h1 { font-size: 11px; line-height: 14px; font-weight: 400; color: #8d97a5; }
.group { display: flex; align-items: center; }
.ob { height: 15px; border: 1px solid #8e97a5; border-radius: 2px; background: #fff; color: #44556b; min-width: 13px; }
.sq { width: 14px; margin-left: 2px; padding: 0; }
.driver { width: 102px; }
.selwrap { position: relative; flex: 1; }
.selwrap svg { position: absolute; right: 5px; top: 5px; color: #777; pointer-events: none; }
.sel, .inp { display: block; width: 100%; height: 14px; border: 1px solid #dcdcdc; border-radius: 2px; background: #fff; padding: 0 4px; appearance: none; color: #444; font-size: 6px; }
.green { width: 14px; height: 14px; background: #28a745; color: #fff; border-radius: 0 2px 2px 0; }
.fade { opacity: .65; }
.viewer { margin-left: 14px; width: 44px; padding: 0; height: 14px; }
.summary { display: flex; padding-top: 6px; height: 50px; border-bottom: 1px solid #f6f6f6; }
.pills { display: flex; width: 166px; align-items: start; font-size: 7px; }
.pills button { height: 17px; padding: 0 7px; border: 1px solid #e9e9e9; border-left: 0; }
.pills .on { background: #8153d3; color: #fff; border-color: #8153d3; border-radius: 2px 0 0 2px; }
.rings { display: flex; gap: 2px; }
.rv { font: bold 8px "Liberation Sans", sans-serif; text-anchor: middle; fill: #33475f; }
.rt { font: 5px "Liberation Sans", sans-serif; text-anchor: middle; fill: #44566c; }
.ctl { margin-left: auto; }
.ctlrow { display: flex; justify-content: end; }
.upload { position: relative; height: 14px; width: 68px; margin-right: 1px; }
.badges { position: absolute; left: 4px; top: -6px; display: flex; gap: 2px; color: #fff; line-height: 8px; }
.badges b { background: #28a745; border-radius: 2px; height: 8px; min-width: 8px; padding: 0 2px; display: flex; align-items: center; gap: 1px; }
.badges .q { background: #343a45; margin-left: 2px; }
.legend { width: 36px; height: 14px; padding: 0; }
.second { margin-top: 7px; }
.second .ob { height: 17px; font-size: 7px; border-radius: 2px 0 0 2px; }
.second .devents { width: 63px; gap: 5px; }
.second .gear { width: 25px; margin-left: -1px; border-radius: 0 2px 2px 0; }
.ue { display: grid; gap: 2px; margin-right: 1px; }
.ue b { background: #dc3545; color: #fff; border-radius: 2px; width: 21px; height: 8px; line-height: 8px; text-align: center; font-size: 6px; }
.scroll { flex: 1; min-height: 0; display: flex; overflow: hidden; }
.track { flex: none; width: 4px; background: #eceef1; }
.thumb { display: block; background: #67788f; }
.lthumb { margin-top: 68px; height: 21px; }
.days { flex: 1; min-width: 0; padding-top: 4px; }
.day { height: 135px; }
.dayacts { display: flex; justify-content: end; padding-right: 3px; gap: 2px; position: relative; }
.dayacts .btn { width: 46px; padding: 0; }
.cursor { position: absolute; right: 3px; top: -5px; }
.chat { width: 16px; color: #44556b; }
.off { background: #f5f5f5; border-color: #eaeaea; color: #d0d0d0; }
.dayhead { display: grid; grid-template-columns: 1fr auto 1fr; align-items: end; padding: 0 33px 0 3px; margin-top: 9px; height: 14px; }
.dayhead button { height: 14px; border-radius: 2px; font-size: 6px; font-family: "Open Sans", sans-serif; padding: 0; }
.codr { width: 43px; background: #8b68c8; color: #fff; }
.dayhead .trk { width: 14px; border-radius: 0 2px 2px 0; }
.dayhead .trucks { width: 32px; background: #fdbe0c; margin: 0 2px; }
.go { width: 14px; border: 1px solid #8fd19e; color: #28a745; background: #fff; }
.dayhead .go.a { border: 1px solid #8fd19e; color: #72c585; margin-right: -1px; border-radius: 2px 0 0 2px; }
.dayhead h2 { font: 800 7px/8px "Open Sans", sans-serif; color: #000; }
.chart { width: 100%; height: auto; margin-top: 4px; overflow: visible; }
.hr { font: 5px "Liberation Sans", sans-serif; fill: #888; text-anchor: middle; }
.dur { font: 6px "Liberation Sans", sans-serif; fill: #222; text-anchor: middle; }
.st { font: bold 8px "Liberation Sans", sans-serif; }
.end { text-anchor: end; }

.right { display: flex; flex-direction: column; min-height: 0; padding: 0 7px 0 11px; }
.rtitle { font-size: 12px; line-height: 14px; font-weight: 400; padding: 8px 0 5px 58px; }
.right .track { width: 5px; }
.rthumb { margin-top: 23px; height: 114px; }
.panel { flex: 1; min-width: 0; }
.card { border: 1px solid #e8e8ea; border-radius: 2px; }
.trans { border-top: 0; padding: 0 5px 3px; }
.trans p { line-height: 8px; }
.trans .cut { margin-top: -2px; }
.gtext { color: #5cb85c; }
.chk { display: flex; align-items: center; gap: 4px; color: #777; height: 9px; margin-bottom: 5px; }
.chk input { width: 5px; height: 5px; margin: 0 0 0 1px; }
.trow { border-top: 1px solid #ededed; display: grid; grid-template-columns: 95px 1fr; height: 21px; align-items: center; }
.trow:last-child { height: 20px; }
.own { flex: none; width: 94px; }
.ph { color: #999; }
.date { width: 71px; }
.alert { margin-top: 4px; background: #f8d7da; color: #721c24; display: flex; justify-content: space-between; align-items: start; padding: 5px 9px 6px 10px; font-size: 7px; line-height: 11px; border-radius: 2px; }
.alert p { width: 112px; }
.alert button { background: #dc3545; color: #fff; width: 75px; height: 18px; border-radius: 2px; }
.rt-at { display: flex; align-items: center; gap: 4px; height: 13px; font-size: 7px; }
.sw { appearance: none; width: 12px; height: 7px; border-radius: 4px; border: 1px solid #ccc; background: radial-gradient(circle at 3px 50%, #adb5bd 2px, transparent 3px); margin: 0; }
.tools { display: flex; flex-wrap: wrap; justify-content: center; gap: 2px; }
.tool { position: relative; width: 17px; height: 16px; padding: 0; }
.wide { width: 25px; }
.soft { background: #8f74c8; }
.cnt { position: absolute; right: 1px; top: 0; width: 8px; height: 8px; border-radius: 50%; background: #fdbe0c; color: #333; font-size: 5px; line-height: 8px; }
.tool-card { margin-top: 5px; height: 140px; }
h3 { font-size: 7px; font-weight: 400; line-height: 22px; background: #eeeaf8; padding: 0 9px; }
.form { padding: 10px 5px 0; }
.form label { display: block; line-height: 10px; }
.fld em { color: #f33; font-style: normal; }
.half { width: 104px; }
.two { display: grid; grid-template-columns: 1fr 1fr; gap: 10px; margin-top: 4px; }
.three { display: grid; grid-template-columns: 1fr 1fr 1fr; gap: 10px; margin-top: 4px; }
.dis { background: #e9ecef; opacity: 1; }
.crow { display: flex; justify-content: space-between; }
.pins { display: flex; align-items: center; background: #eaf2fd; color: #222; padding: 0 2px; gap: 1px; white-space: pre; }
.foot { flex: none; height: 11px; background: #f4f4f4; display: flex; justify-content: end; align-items: center; gap: 8px; padding-right: 8px; font-size: 6px; }
.titan { display: flex; align-items: center; color: #333; }
.titan i { font-style: normal; color: #3a9bd3; }

.taskbar { flex: none; height: 20px; background: #1f1f20; display: flex; align-items: center; color: #fff; font: 6px/9px "Open Sans", sans-serif; }
.start { width: 24px; height: 20px; }
.tsearch { width: 144px; height: 20px; background: #f1f1f1; color: #333; display: flex; align-items: center; gap: 6px; padding-left: 6px; font-size: 8px; }
.tsearch input { width: 60px; }
.tsearch input::placeholder { color: #444; opacity: 1; }
.castle { margin-left: -39px; }
.apps { display: flex; margin-left: 1px; }
.apps button { width: 25px; height: 20px; }
.apps .run { border-bottom: 1px solid #e9b08a; }
.apps .cur { background: #454546; }
.tray { margin-left: auto; display: flex; align-items: center; gap: 4px; padding-right: 12px; }
.wx { font-size: 7px; margin-right: 8px; }
.lang { margin-right: 3px; }
.clock { text-align: center; font-size: 6px; }
.nt { position: relative; margin-left: 7px; }
.nt b { position: absolute; right: -4px; bottom: -3px; width: 7px; height: 7px; border-radius: 50%; background: #444; font-size: 5px; line-height: 7px; text-align: center; }
</style>
